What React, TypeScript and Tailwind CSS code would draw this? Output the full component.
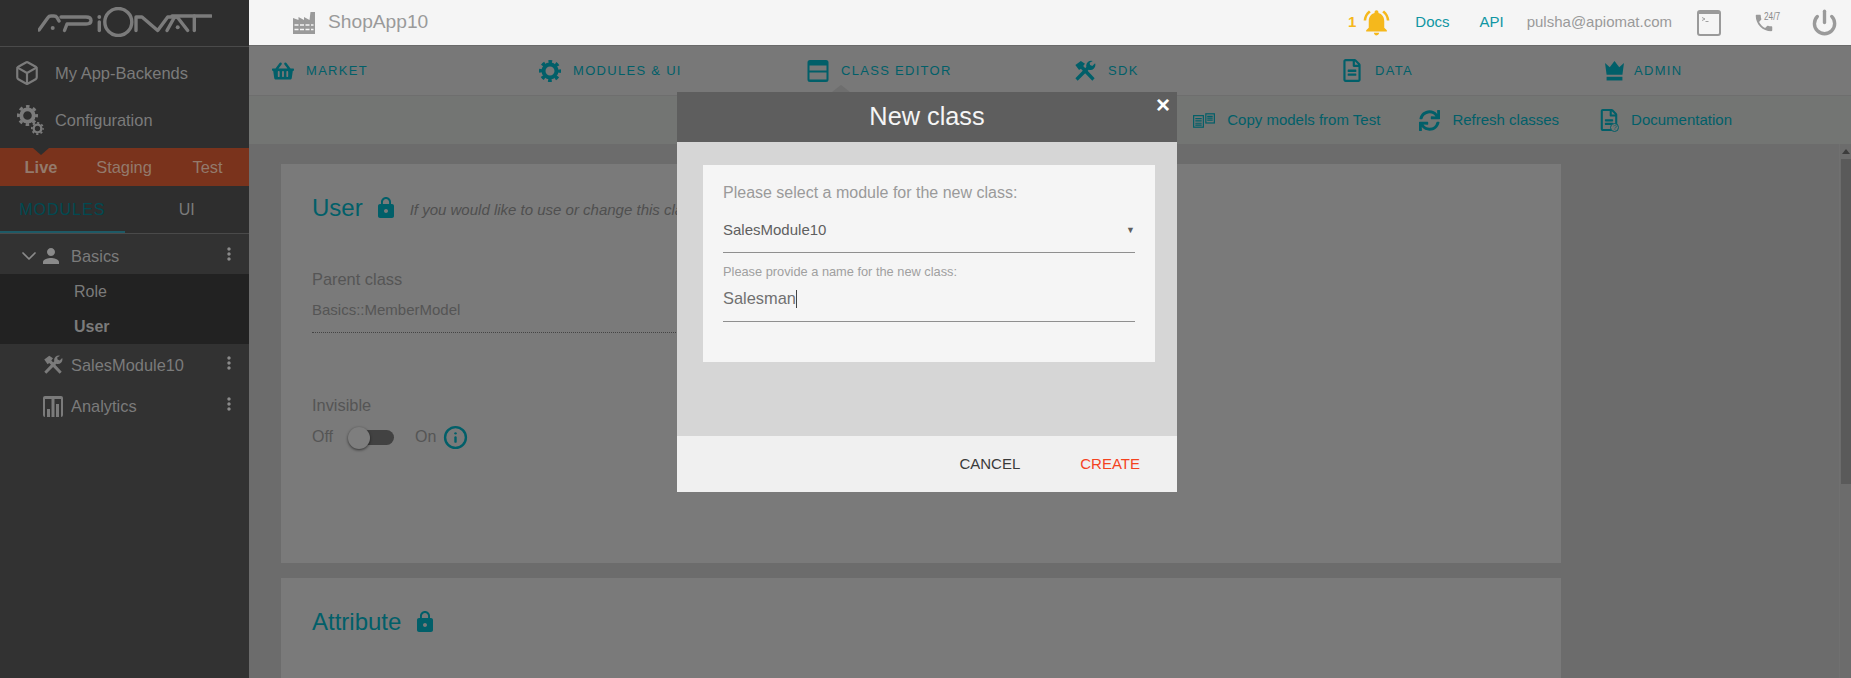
import React from "react";
import { MdNotificationsActive, MdPerson, MdMoreVert, MdPhone, MdLock } from "react-icons/md";
import { FaShoppingBasket, FaRegFileAlt, FaSync } from "react-icons/fa";
import { Box, ChevronDown, Info, Power } from "lucide-react";

const teal = "text-[#015f69]";

function Logo() {
  return (
    <svg width="174" height="30" viewBox="0 0 174 30" fill="none" stroke="#7b7b7b" strokeWidth="3.400" strokeLinecap="round" strokeLinejoin="round" className="block">
      <path d="M1 23 L10 10.500 Q11 9 13 9 H16 Q18 9 19 10.500 L21 14" />
      <circle cx="14.700" cy="21" r="2" fill="#7b7b7b" stroke="none" />
      <path d="M23 10 H48 Q53 10 53 13.500 Q53 17 48 17 H29 L26.500 23.500" />
      <path d="M61.300 15 V23.500" />
      <circle cx="61.300" cy="10" r="1.900" fill="#7b7b7b" stroke="none" />
      <circle cx="80.300" cy="15" r="13.500" />
      <path d="M98 23.500 V10 H104 L119.700 23.500 L129.700 10 L134 10" />
      <path d="M129 23.500 L136 11 Q138 9 140 11 L149.700 23.500" />
      <path d="M134 9 H173" />
      <path d="M156.300 9 V23.500" />
      <circle cx="139.700" cy="20.300" r="2" fill="#7b7b7b" stroke="none" />
    </svg>
  );
}

function Factory() {
  return (
    <svg width="22" height="22" viewBox="0 0 22 22" className="shrink-0">
      <path d="M0 6 V22 H22 V0 H17.500 L16.500 8 L11 5 V8 L5.500 5 V8 Z" fill="#9a9a9a" />
      <path d="M1.500 13 H20.500 M1.500 17.500 H20.500" stroke="#f5f5f5" strokeWidth="1.300" strokeDasharray="4 1.500" />
    </svg>
  );
}

function Gear({ size, className }: { size: number; className?: string }) {
  return (
    <svg width={size} height={size} viewBox="0 0 22 22" fill="none" stroke="currentColor" className={className}>
      <circle cx="11" cy="11" r="6.500" strokeWidth="4" />
      <circle cx="11" cy="11" r="9.500" strokeWidth="3" strokeDasharray="3.700 3.760" strokeDashoffset="1.850" />
    </svg>
  );
}

function Gears() {
  return (
    <span className="relative block h-[30px] w-[27px]">
      <Gear size={21} className="absolute left-0 top-0 text-[#7b7b7b]" />
      <Gear size={13} className="absolute bottom-0 right-0 text-[#7b7b7b]" />
    </span>
  );
}

function Tools({ size, color }: { size: number; color?: string }) {
  return (
    <svg width={size} height={size} viewBox="0 0 24 24" fill={color ?? "currentColor"} className="shrink-0">
      <path d="M1.500 5.500 L7.500 1 L12 4 L10 6.500 L22.500 20 L20 22.500 L7.500 9.500 L5.500 11 Z" />
      <path d="M20.500 1 a5.500 5.500 0 0 0 -7 6.500 L1.500 20 l2.500 2.500 L16 10.500 a5.500 5.500 0 0 0 7 -7 l-3 3 l-2.500 -1 l-0.500 -2.500 z" />
    </svg>
  );
}

function TabIcon() {
  return (
    <svg width="22" height="22" viewBox="0 0 22 22" fill="currentColor">
      <path fillRule="evenodd" d="M3 0h16a2.500 2.500 0 0 1 2.500 2.500v17A2.500 2.500 0 0 1 19 22H3a2.500 2.500 0 0 1-2.500-2.500v-17A2.500 2.500 0 0 1 3 0zM2.500 5.500v5h17v-5zM2.500 12.500v7h17v-7z" />
    </svg>
  );
}

function Crown() {
  return (
    <svg width="19" height="20" viewBox="0 0 18 19" fill="currentColor">
      <path d="M0 2l4.500 4L9 0l4.500 6L18 2l-1.500 11H1.500z" />
      <rect x="1.500" y="15" width="15" height="3.500" />
    </svg>
  );
}

function Analytics() {
  return (
    <svg width="20" height="21" viewBox="0 0 20 21">
      <rect x="0" y="0" width="20" height="21" rx="2" fill="#7b7b7b" />
      <rect x="2" y="3" width="16" height="18" fill="#323232" />
      <rect x="4" y="13" width="3" height="8" fill="#7b7b7b" />
      <rect x="8.500" y="0" width="3" height="21" fill="#7b7b7b" />
      <rect x="13" y="8" width="3" height="13" fill="#7b7b7b" />
    </svg>
  );
}

function Terminal() {
  return (
    <svg width="24" height="26" viewBox="0 0 24 26" fill="none" className="block">
      <rect x="1" y="1" width="22" height="24" rx="2" stroke="#9a9a9a" strokeWidth="2" />
      <rect x="1" y="1" width="22" height="3" fill="#9a9a9a" />
      <path d="M5 7.500l3 1.500L5 10.500M8.500 11.500h3" stroke="#8a8a8a" strokeWidth="0.800" />
    </svg>
  );
}

function CopyDocs() {
  return (
    <svg width="22" height="15" viewBox="0 0 24 16" fill="none" stroke="currentColor" strokeWidth="1.300">
      <rect x="0.700" y="2.700" width="10.600" height="12.600" />
      <path d="M2.500 6h7M2.500 8.500h7M2.500 11h7M2.500 13h7" />
      <rect x="14" y="0.700" width="9.300" height="10" />
      <path d="M15.500 3.500h6M15.500 5.500h6M15.500 7.500h6" />
    </svg>
  );
}

function DocHelp() {
  return (
    <span className="relative block h-[22px] w-[20px]">
      <FaRegFileAlt size={22} className="absolute left-0 top-0" />
      <span className="absolute bottom-[-1px] right-[-1px] flex h-[9px] w-[9px] items-center justify-center rounded-full border border-current bg-[#737573] text-[7px] leading-none">?</span>
    </span>
  );
}

function NavItem({ icon, label, w }: { icon: React.ReactNode; label: string; w: string }) {
  return (
    <div className={`flex items-center gap-[12px] ${w} ${teal}`}>
      <span className="flex w-[22px] justify-center">{icon}</span>
      <span className="text-[13px] tracking-[1.300px]">{label}</span>
    </div>
  );
}

function SubAction({ icon, label }: { icon: React.ReactNode; label: string }) {
  return (
    <div className={`flex items-center gap-[12px] ${teal}`}>
      <span className="flex w-[22px] justify-center">{icon}</span>
      <span className="text-[15px]">{label}</span>
    </div>
  );
}

function TreeRow({ icon, label }: { icon: React.ReactNode; label: string }) {
  return (
    <div className="relative flex h-[41px] items-center pl-[43px] pt-[1px]">
      <span className="flex w-[28px] justify-start">{icon}</span>
      <span className="text-[16.400px] text-[#7b7b7b]">{label}</span>
      <MdMoreVert className="absolute right-[10px] top-[9px] text-[#8a8a8a]" size={20} />
    </div>
  );
}

export default function App() {
  return (
    <div className="relative flex h-[678px] w-[1851px] overflow-hidden bg-[#6c6c6c] font-['Liberation_Sans',sans-serif]">
      <aside className="flex w-[249px] shrink-0 flex-col bg-[#2e2e2e] text-[#7b7b7b]">
        <div className="flex h-[47px] items-center justify-center border-b border-[#4a4a4a] pb-[2px]">
          <Logo />
        </div>
        <div className="flex h-[50px] items-center pl-[14px] pt-[2px]">
          <span className="w-[41px]"><Box size={26} strokeWidth={2} className="text-[#7b7b7b]" /></span>
          <span className="text-[16.500px]">My App-Backends</span>
        </div>
        <div className="flex h-[51px] items-center pb-[5px] pl-[17px]">
          <span className="w-[38px]"><Gears /></span>
          <span className="text-[16.400px]">Configuration</span>
        </div>
        <div className="relative grid h-[38px] grid-cols-[82px_84px_1fr] items-center bg-[#7a331c] text-center text-[16.400px] text-[#937a6c]">
          <span className="absolute left-[33px] top-0 h-0 w-0 border-x-[8px] border-t-[7px] border-x-transparent border-t-[#2e2e2e]" />
          <span className="font-bold">Live</span>
          <span>Staging</span>
          <span>Test</span>
        </div>
        <div className="grid h-[48px] grid-cols-2 items-center border-b border-[#4a4a4a] pt-[1px] text-center text-[16px]">
          <div className="relative flex h-full items-center justify-center tracking-[1px] text-[#014a52]">
            MODULES
            <span className="absolute inset-x-0 bottom-0 h-[2px] bg-[#1e5a66]" />
          </div>
          <div>UI</div>
        </div>
        <div className="relative flex h-[40px] items-center bg-[#323232] pl-[17px] pt-[4px]">
          <ChevronDown size={24} strokeWidth={1.700} className="text-[#8a8a8a]" />
          <MdPerson size={24} className="ml-[-2px] text-[#8a8a8a]" />
          <span className="ml-[8px] text-[16.400px]">Basics</span>
          <MdMoreVert className="absolute right-[10px] top-[10px] text-[#8a8a8a]" size={20} />
        </div>
        <div className="flex h-[70px] flex-col justify-center bg-[#222222] pl-[74px] text-[16px]">
          <div className="flex h-[35px] items-center">Role</div>
          <div className="flex h-[35px] items-center font-bold">User</div>
        </div>
        <div className="flex-1 bg-[#323232]">
          <TreeRow icon={<Tools size={20} color="#7b7b7b" />} label="SalesModule10" />
          <TreeRow icon={<Analytics />} label="Analytics" />
        </div>
      </aside>

      <div className="flex min-w-0 flex-1 flex-col">
        <header className="flex h-[46px] shrink-0 items-center border-b border-[#6a6a6a] bg-[#f5f5f5] pl-[44px]">
          <Factory />
          <span className="ml-[13px] text-[19.200px] text-[#9a9a9a]">ShopApp10</span>
          <div className="ml-auto flex items-center">
            <span className="text-[15px] font-bold text-[#f5b81c]">1</span>
            <MdNotificationsActive size={31} className="ml-[5px] text-[#f5b81c]" />
            <span className="ml-[23px] text-[15px] text-[#0f96a3]">Docs</span>
            <span className="ml-[30px] text-[15px] text-[#0f96a3]">API</span>
            <span className="ml-[23px] text-[15px] text-[#9a9a9a]">pulsha@apiomat.com</span>
            <span className="ml-[25px]"><Terminal /></span>
            <span className="relative ml-[35px] h-[24px] w-[24px]">
              <MdPhone size={22} className="absolute left-[-3px] top-[1px] text-[#9a9a9a]" />
              <span className="absolute left-[8px] top-[-2px] origin-left scale-x-75 text-[11px] leading-[14px] text-[#8a8a8a]">24/7</span>
            </span>
            <Power size={27} strokeWidth={3} className="ml-[31px] mr-[13px] text-[#9a9a9a]" />
          </div>
        </header>

        <nav className="flex h-[50px] shrink-0 items-center border-b border-[#6e6e6e] bg-[#787878] pl-[23px]">
          <NavItem w="w-[267px]" icon={<FaShoppingBasket size={22} />} label="MARKET" />
          <NavItem w="w-[268px]" icon={<Gear size={22} />} label="MODULES & UI" />
          <NavItem w="w-[267px]" icon={<TabIcon />} label="CLASS EDITOR" />
          <NavItem w="w-[267px]" icon={<Tools size={22} />} label="SDK" />
          <NavItem w="w-[264px]" icon={<FaRegFileAlt size={23} />} label="DATA" />
          <div className={`flex items-center gap-[10px] ${teal}`}>
            <Crown />
            <span className="text-[13px] tracking-[1.300px]">ADMIN</span>
          </div>
        </nav>

        <div className="flex h-[48px] shrink-0 items-center justify-end gap-[38px] bg-[#737573] pr-[119px]">
          <SubAction icon={<CopyDocs />} label="Copy models from Test" />
          <SubAction icon={<FaSync size={21} />} label="Refresh classes" />
          <SubAction icon={<DocHelp />} label="Documentation" />
        </div>

        <main className="relative flex min-h-0 flex-1 flex-col gap-[15px] overflow-hidden pl-[32px] pr-[290px] pt-[20px]">
          <section className="h-[399px] shrink-0 bg-[#7a7a7a] pl-[31px] pt-[26px]">
            <div className="flex items-center">
              <span className={`text-[24px] ${teal}`}>User</span>
              <MdLock size={24} className={`ml-[11px] ${teal}`} />
              <span className="ml-[12px] mt-[4px] whitespace-nowrap text-[15px] italic text-[#4f4f4f]">If you would like to use or change this class, please create a new one in your module/app.</span>
            </div>
            <div className="mt-[41px] text-[16.400px] text-[#555555]">Parent class</div>
            <div className="mt-[7px] w-[560px] border-b border-dotted border-[#444444] pb-[11px] text-[15px] text-[#555555]">Basics::MemberModel</div>
            <div className="mt-[60px] text-[16.400px] text-[#555555]">Invisible</div>
            <div className="mt-[7px] flex items-center text-[16px] text-[#555555]">
              <span>Off</span>
              <span className="relative ml-[19px] h-[15px] w-[42px] rounded-full bg-[#424242]">
                <span className="absolute left-[-4px] top-[-3px] block h-[22px] w-[22px] rounded-full bg-[#7e7e7e] shadow-[0_1px_3px_rgba(0,0,0,0.6)]" />
              </span>
              <span className="ml-[21px]">On</span>
              <Info size={25} strokeWidth={2.300} className={`ml-[7px] ${teal}`} />
            </div>
          </section>
          <section className="h-[200px] shrink-0 bg-[#7a7a7a] pl-[31px] pt-[26px]">
            <div className="flex items-center">
              <span className={`text-[24px] ${teal}`}>Attribute</span>
              <MdLock size={24} className={`ml-[12px] ${teal}`} />
            </div>
          </section>
          <div className="absolute bottom-0 right-0 top-0 flex w-[12px] flex-col items-end border-l border-[#707070] bg-[#6c6c6c]">
            <span className="mr-[1px] mt-[5px] h-0 w-0 border-x-[4px] border-b-[5px] border-x-transparent border-b-[#3c3c3c]" />
            <span className="mt-[5px] h-[325px] w-[10px] bg-[#5a5a5a]" />
          </div>
        </main>
      </div>

      <span className="absolute left-[832px] top-[85px] h-0 w-0 border-x-[9px] border-b-[7px] border-x-transparent border-b-[#6e6e6e]" />
      <div className="absolute left-[677px] top-[92px] flex h-[400px] w-[500px] flex-col">
        <div className="relative flex h-[50px] shrink-0 items-center justify-center bg-[#5e5e5e] text-[25.300px] text-[#f5f5f5]">
          New class
          <span className="absolute right-[7px] top-[0px] text-[24px] font-bold leading-[26px] text-white">×</span>
        </div>
        <div className="flex-1 bg-[#d6d6d6] pl-[26px] pr-[22px] pt-[23px]">
          <div className="h-[197px] bg-[#f5f5f5] px-[20px] pt-[16px]">
            <div className="text-[16px] text-[#9a9a9a]">Please select a module for the new class:</div>
            <div className="mt-[14px] flex items-center justify-between border-b border-[#8f8f8f] pb-[10px] text-[15px] text-[#5f5f5f]">
              <span>SalesModule10</span>
              <span className="text-[9px] text-[#5f5f5f]">▼</span>
            </div>
            <div className="mt-[9px] text-[12.800px] text-[#a0a0a0]">Please provide a name for the new class:</div>
            <div className="mt-[4px] box-content flex h-[28px] items-center border-b border-[#8f8f8f] pb-[8px] text-[16.400px] text-[#707070]">
              <span>Salesman</span>
              <span className="h-[18px] w-[1px] bg-[#444444]" />
            </div>
          </div>
        </div>
        <div className="flex h-[56px] shrink-0 items-center justify-end gap-[60px] bg-[#f0f0f0] pr-[37px] text-[15px]">
          <span className="text-[#3a3a3a]">CANCEL</span>
          <span className="text-[#f4431f]">CREATE</span>
        </div>
      </div>
    </div>
  );
}
